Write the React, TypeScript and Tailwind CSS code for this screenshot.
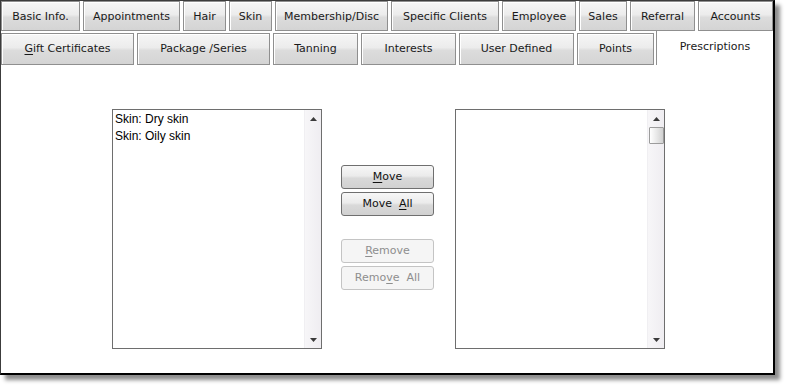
import React from "react";

const row1 = [
  { label: "Basic Info.", w: "w-[79px]" },
  { label: "Appointments", w: "w-[97px]" },
  { label: "Hair", w: "w-[43px]" },
  { label: "Skin", w: "w-[43px]" },
  { label: "Membership/Disc", w: "w-[113px]" },
  { label: "Specific Clients", w: "w-[108px]" },
  { label: "Employee", w: "w-[74px]" },
  { label: "Sales", w: "w-[48px]" },
  { label: "Referral", w: "w-[65px]" },
  { label: "Accounts", w: "flex-1" },
];

const row2: { label: React.ReactNode; w: string }[] = [
  {
    label: (
      <>
        <span className="underline underline-offset-2">G</span>ift Certificates
      </>
    ),
    w: "w-[133px]",
  },
  { label: "Package /Series", w: "w-[133px]" },
  { label: "Tanning", w: "w-[85px]" },
  { label: "Interests", w: "w-[95px]" },
  { label: "User Defined", w: "w-[115px]" },
  { label: "Points", w: "w-[77px]" },
];

const tabBg =
  "bg-[linear-gradient(to_bottom,#f6f6f6_0%,#ececec_45%,#dcdcdc_55%,#d4d4d4_100%)]";

function Tab({ label, w, extra = "" }: { label: React.ReactNode; w: string; extra?: string }) {
  return (
    <div
      className={`${w} h-full shrink-0 border border-[#8f8f8f] ${tabBg} shadow-[inset_1px_1px_0_#ffffff] flex items-center justify-center text-[#1a1a1a] ${extra}`}
    >
      {label}
    </div>
  );
}

function Arrow({ up }: { up?: boolean }) {
  return (
    <svg width="7" height="4" viewBox="0 0 7 4" className="block">
      {up ? (
        <polygon points="3.5,0 7,4 0,4" fill="#3a3a3a" />
      ) : (
        <polygon points="0,0 7,0 3.5,4" fill="#3a3a3a" />
      )}
    </svg>
  );
}

function ListBox({ items, thumb }: { items: string[]; thumb?: boolean }) {
  return (
    <div className="w-[210px] h-[240px] shrink-0 border border-[#6e6e6e] bg-white flex">
      <div className="flex-1 pl-[2px] pt-[1px] font-['Liberation_Sans',Arial,sans-serif] text-[12px] leading-[17px] text-black">
        {items.map((t) => (
          <div key={t}>{t}</div>
        ))}
      </div>
      <div className="w-[17px] h-full bg-[linear-gradient(to_right,#f7f6f8,#efedf1)] border-l border-[#f0eff2] flex flex-col">
        <div className="h-[17px] flex items-center justify-center">
          <Arrow up />
        </div>
        {thumb ? (
          <div className="mx-auto w-[15px] h-[17px] border border-[#9c9c9c] rounded-[1px] bg-[linear-gradient(to_right,#ffffff,#e4e4e4_60%,#d0d0d0)]" />
        ) : null}
        <div className="flex-1" />
        <div className="h-[17px] flex items-center justify-center">
          <Arrow />
        </div>
      </div>
    </div>
  );
}

function Btn({ children, disabled, className = "" }: { children: React.ReactNode; disabled?: boolean; className?: string }) {
  return (
    <div
      className={`h-[24px] rounded-[3px] border flex items-center justify-center ${
        disabled
          ? "border-[#c4c4c4] bg-[#f5f5f5] text-[#8e8e8e]"
          : "border-[#6f6f6f] bg-[linear-gradient(to_bottom,#f7f7f7_0%,#ebebeb_45%,#d9d9d9_55%,#d1d1d1_100%)] text-[#111]"
      } ${className}`}
    >
      {children}
    </div>
  );
}

export default function App() {
  return (
    <div className="w-[786px] h-[386px] bg-white relative font-['DejaVu_Sans',sans-serif] text-[11px]">
      <div className="w-[775px] h-[375px] border-l border-t border-[#3c3c3c] border-r-2 border-b-2 border-r-black border-b-black bg-white shadow-[5px_5px_4px_rgba(0,0,0,0.45)] flex flex-col">
        <div className="h-[30px] flex gap-[3px]">
          {row1.map((t) => (
            <Tab key={t.label} label={t.label} w={t.w} extra="pt-[2px]" />
          ))}
        </div>
        <div className="h-[34px] flex gap-[3px] items-end">
          {row2.map((t, i) => (
            <div key={i} className={`${t.w} h-[32px] shrink-0 flex`}>
              <Tab label={t.label} w="w-full" />
            </div>
          ))}
          <div className="flex-1 -ml-[1px] h-[34px] bg-white border-l border-[#8f8f8f] flex justify-center pt-[8px] text-[#1a1a1a]">
            Prescriptions
          </div>
        </div>
        <div className="flex-1 flex pl-[111px] pt-[44px]">
          <ListBox items={["Skin: Dry skin", "Skin: Oily skin"]} />
          <div className="ml-[19px] w-[93px] pt-[56px] flex flex-col">
            <Btn>
              <span>
                <span className="underline underline-offset-2">M</span>ove
              </span>
            </Btn>
            <Btn className="mt-[3px]">
              <span className="whitespace-pre">
                Move  <span className="underline underline-offset-2">A</span>ll
              </span>
            </Btn>
            <Btn disabled className="mt-[23px]">
              <span>
                <span className="underline underline-offset-2">R</span>emove
              </span>
            </Btn>
            <Btn disabled className="mt-[3px]">
              <span className="whitespace-pre">
                Remo<span className="underline underline-offset-2">v</span>e  All
              </span>
            </Btn>
          </div>
          <div className="ml-[21px]">
            <ListBox items={[]} thumb />
          </div>
        </div>
      </div>
    </div>
  );
}
